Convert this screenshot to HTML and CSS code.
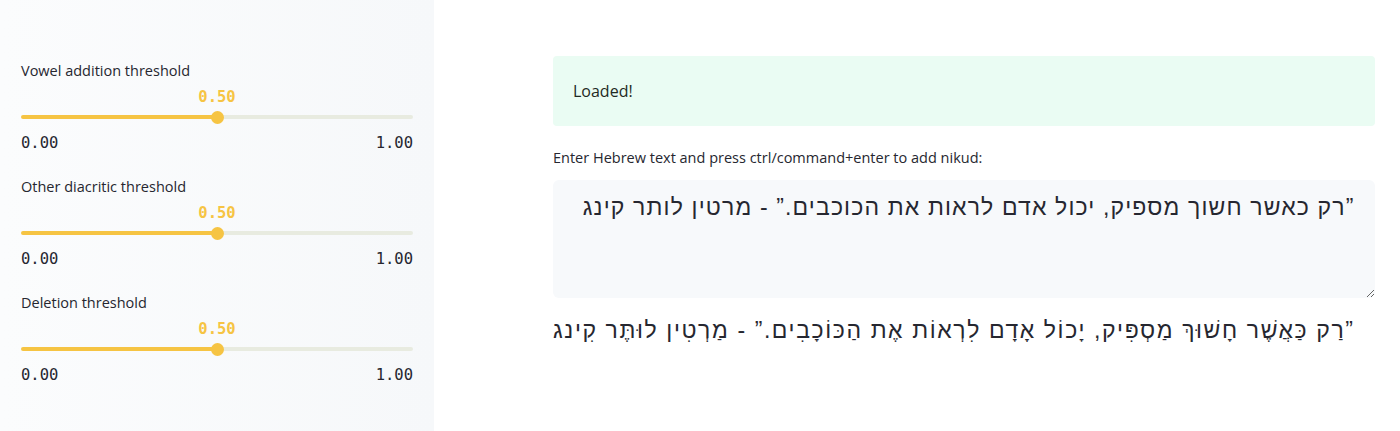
FILE: index.html
```html
<!DOCTYPE html>
<html lang="en">
<head>
<meta charset="utf-8">
<title>Nikud</title>
<link rel="stylesheet" href="styles.css">
</head>
<body>
<div class="app">
  <aside class="sidebar">
    <div class="slider-block">
      <div class="label">Vowel addition threshold</div>
      <div class="value">0.50</div>
      <div class="track"><span class="thumb"></span></div>
      <div class="ticks"><span>0.00</span><span>1.00</span></div>
    </div>
    <div class="slider-block">
      <div class="label">Other diacritic threshold</div>
      <div class="value">0.50</div>
      <div class="track"><span class="thumb"></span></div>
      <div class="ticks"><span>0.00</span><span>1.00</span></div>
    </div>
    <div class="slider-block">
      <div class="label">Deletion threshold</div>
      <div class="value">0.50</div>
      <div class="track"><span class="thumb"></span></div>
      <div class="ticks"><span>0.00</span><span>1.00</span></div>
    </div>
  </aside>
  <main class="main">
    <div class="alert">Loaded!</div>
    <div class="field-label">Enter Hebrew text and press ctrl/command+enter to add nikud:</div>
    <textarea class="input">”רק כאשר חשוך מספיק, יכול אדם לראות את הכוכבים.” - מרטין לותר קינג</textarea>
    <div class="output" dir="rtl">”רַק כַּאֲשֶׁר חָשׁוּךְ מַסְפִּיק, יָכוֹל אָדָם לִרְאוֹת אֶת הַכּוֹכָבִים.” - מַרְטִין לוּתֶּר קִינג</div>
  </main>
</div>
</body>
</html>
```

FILE: styles.css
```css
html, body {
  margin: 0;
  padding: 0;
  background: #ffffff;
  color: #262730;
  font-family: "Open Sans", "Noto Sans", sans-serif;
}

.app {
  display: flex;
  height: 431px;
  overflow: hidden;
}

.sidebar {
  width: 434px;
  flex: 0 0 434px;
  box-sizing: border-box;
  padding: 61px 21px 0 21px;
  background: linear-gradient(90deg, #fbfcfd 0%, #f6f8fa 100%);
}

.slider-block {
  margin-bottom: 24px;
}

.label {
  font-size: 14.5px;
  line-height: 20px;
  color: #262730;
}

.value {
  margin-top: 6px;
  height: 20px;
  line-height: 20px;
  text-align: center;
  font-family: "DejaVu Sans Mono", "Liberation Mono", monospace;
  font-size: 15.5px;
  font-weight: bold;
  color: #f6c443;
}

.track {
  position: relative;
  margin-top: 8px;
  height: 4px;
  border-radius: 2px;
  background: linear-gradient(90deg, #f6c443 0%, #f6c443 50%, #e8ebe0 50%, #e8ebe0 100%);
}

.thumb {
  position: absolute;
  left: 50%;
  top: 50%;
  width: 13px;
  height: 13px;
  margin-left: -6px;
  margin-top: -6.5px;
  border-radius: 50%;
  background: #f6c443;
}

.ticks {
  margin-top: 14px;
  display: flex;
  justify-content: space-between;
  height: 20px;
  line-height: 20px;
  font-family: "DejaVu Sans Mono", "Liberation Mono", monospace;
  font-size: 15.5px;
  color: #262730;
}

.main {
  flex: 1;
  box-sizing: border-box;
  padding: 56px 28px 0 119px;
  display: flex;
  flex-direction: column;
}

.alert {
  height: 70px;
  box-sizing: border-box;
  padding: 0 20px;
  display: flex;
  align-items: center;
  background: #eafcf3;
  border-radius: 4px;
  font-size: 16px;
  color: #1f2a24;
}

.field-label {
  margin-top: 22px;
  font-size: 14.5px;
  line-height: 20px;
  color: #262730;
}

.input {
  margin-top: 12px;
  height: 118px;
  box-sizing: border-box;
  padding: 13px 20px 13px 6px;
  border: none;
  outline: none;
  border-radius: 6px;
  background: #f7f9fb;
  font-family: "Liberation Sans", "DejaVu Sans", sans-serif;
  font-size: 23px;
  letter-spacing: 1.15px;
  line-height: 28px;
  color: #262730;
  unicode-bidi: plaintext;
  text-align: right;
  resize: vertical;
}

.output {
  margin-top: 18px;
  padding-right: 20px;
  white-space: nowrap;
  font-family: "Liberation Sans", "DejaVu Sans", sans-serif;
  font-size: 23px;
  letter-spacing: 1.6px;
  line-height: 28px;
  color: #262730;
}
```
